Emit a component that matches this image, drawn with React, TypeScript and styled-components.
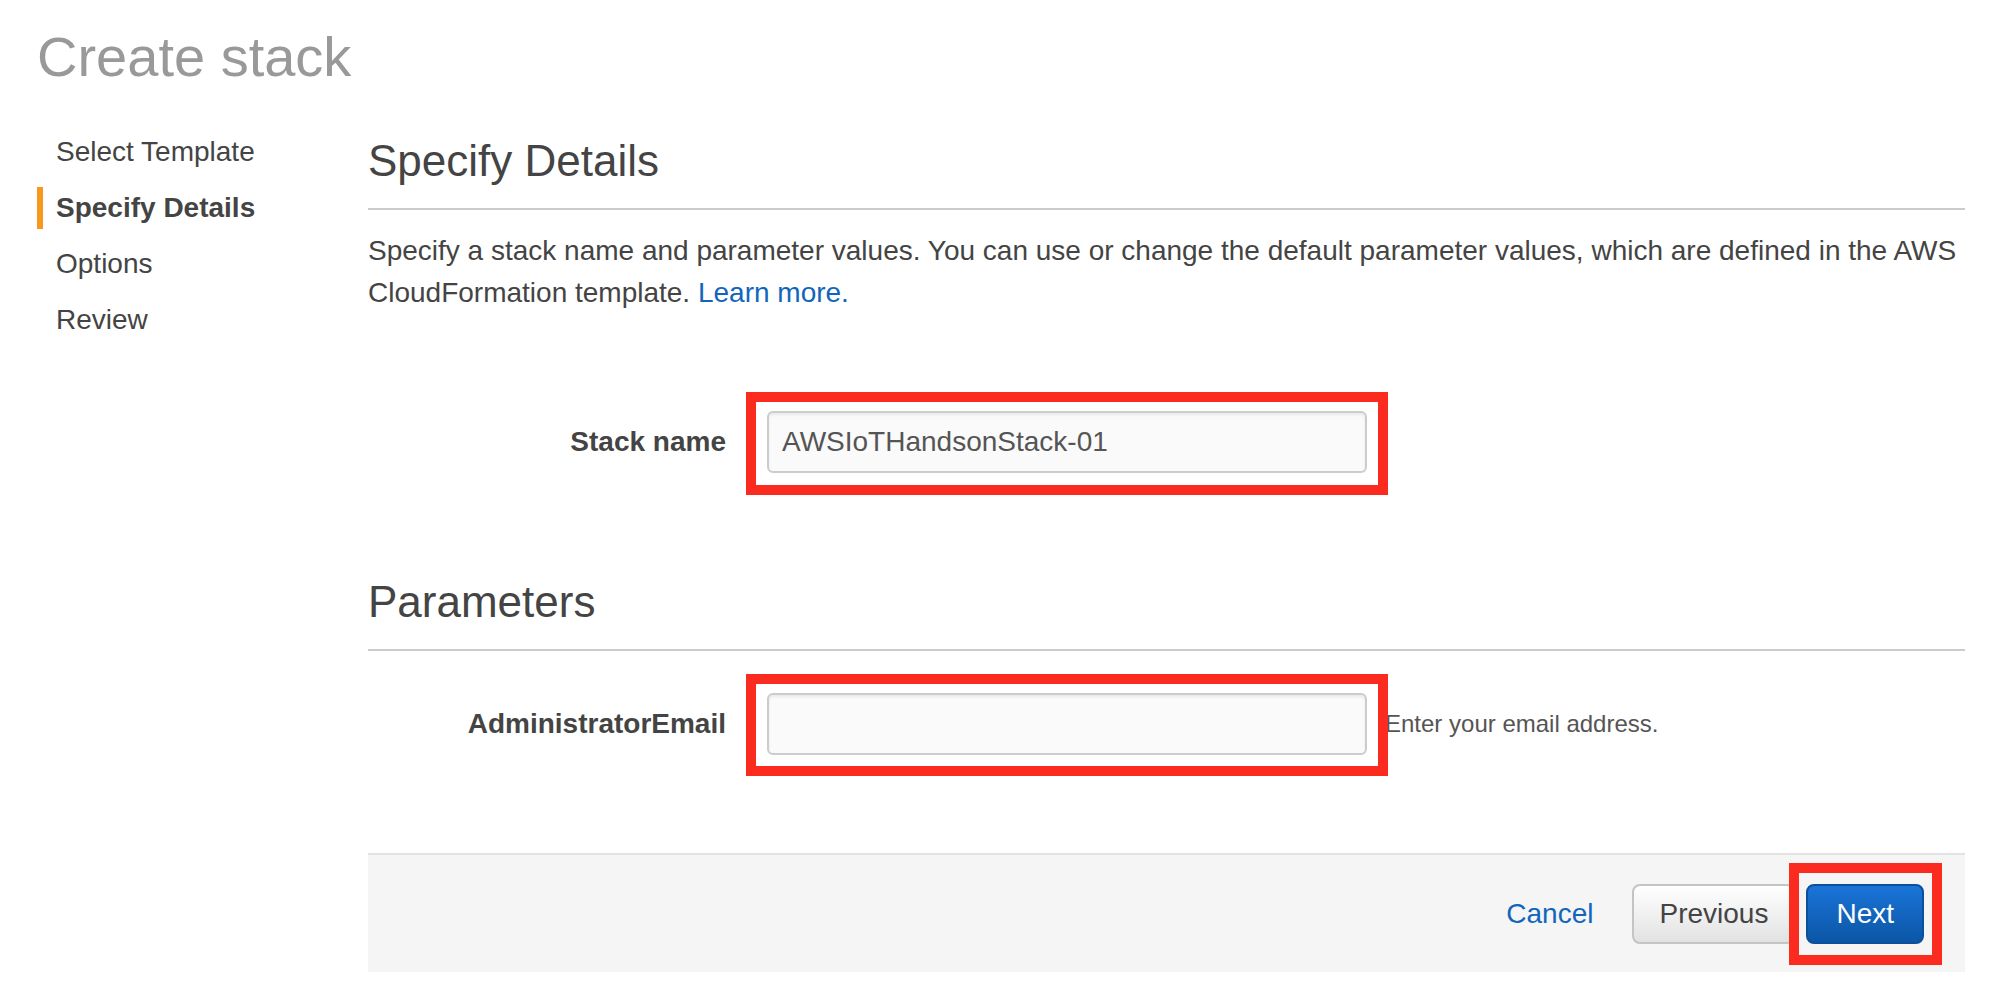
import React from "react";
import styled, { createGlobalStyle } from "styled-components";

const GlobalStyle = createGlobalStyle`
  html, body { margin: 0; padding: 0; background: #ffffff; }
  body {
    font-family: "Liberation Sans", Arial, Helvetica, sans-serif;
    color: #444444;
    -webkit-font-smoothing: antialiased;
  }
  * { box-sizing: border-box; }
`;

const Page = styled.div`
  width: 1990px;
  height: 1002px;
  overflow: hidden;
  padding: 25px 25px 0 37px;
`;

const PageTitle = styled.h1`
  margin: 0;
  font-size: 56px;
  line-height: 64px;
  font-weight: 400;
  color: #999999;
`;

const Layout = styled.div`
  display: grid;
  grid-template-columns: 331px 1fr;
  margin-top: 42px;
`;

const StepList = styled.ul`
  list-style: none;
  margin: 0;
  padding: 0;
  display: flex;
  flex-direction: column;
  gap: 14px;
`;

const Step = styled.li<{ $active?: boolean }>`
  height: 42px;
  line-height: 42px;
  font-size: 28px;
  padding-left: 13px;
  border-left: 6px solid ${(p) => (p.$active ? "#f8991d" : "transparent")};
  font-weight: ${(p) => (p.$active ? 700 : 400)};
  color: #444444;
`;

const Main = styled.main`
  padding-top: 4px;
`;

const SectionTitle = styled.h2<{ $top?: number }>`
  margin: ${(p) => p.$top ?? 0}px 0 0;
  font-size: 44px;
  line-height: 52px;
  font-weight: 400;
  color: #444444;
`;

const Rule = styled.hr`
  margin: 21px 0 0;
  border: 0;
  border-top: 2px solid #cccccc;
  height: 0;
`;

const Intro = styled.p`
  margin: 20px 0 0;
  font-size: 28px;
  line-height: 42px;
  color: #444444;
`;

const Link = styled.a`
  color: #1166bb;
  text-decoration: none;
`;

const FieldRow = styled.div<{ $top: number }>`
  display: flex;
  align-items: center;
  margin-top: ${(p) => p.$top}px;
`;

const FieldLabel = styled.label`
  flex-shrink: 0;
  width: 358px;
  margin-right: 41px;
  text-align: right;
  font-size: 28px;
  font-weight: 700;
  color: #444444;
`;

const Annotated = styled.div<{ $inset: string }>`
  position: relative;
  display: flex;
  &::after {
    content: "";
    position: absolute;
    inset: ${(p) => p.$inset};
    border: 10px solid #fc2b1f;
    pointer-events: none;
  }
`;

const TextInput = styled.input`
  width: 600px;
  height: 62px;
  border: 2px solid #cccccc;
  border-radius: 6px;
  background: #fafafa;
  box-shadow: inset 0 2px 3px rgba(0, 0, 0, 0.07);
  padding: 0 13px;
  font-family: inherit;
  font-size: 28px;
  color: #555555;
  outline: none;
`;

const HelpText = styled.span`
  margin-left: 18px;
  font-size: 24px;
  color: #555555;
`;

const Footer = styled.footer`
  margin-top: 98px;
  height: 119px;
  background: #f5f5f5;
  border-top: 2px solid #e3e3e3;
  display: flex;
  align-items: center;
  justify-content: flex-end;
  padding-right: 41px;
`;

const CancelLink = styled.a`
  margin-right: 39px;
  font-size: 28px;
  color: #1166bb;
  text-decoration: none;
`;

const Button = styled.button<{ $primary?: boolean }>`
  height: 60px;
  padding: 0 ${(p) => (p.$primary ? 28 : 25)}px;
  border-radius: 8px;
  font-family: inherit;
  font-size: 28px;
  cursor: pointer;
  border: 2px solid ${(p) => (p.$primary ? "#0b509c" : "#c4c4c4")};
  color: ${(p) => (p.$primary ? "#ffffff" : "#444444")};
  background: ${(p) =>
    p.$primary
      ? "linear-gradient(#1a74d8, #0b56a6)"
      : "linear-gradient(#ffffff, #e2e2e2)"};
`;

const ButtonGap = styled.div`
  width: 11px;
`;

const steps = ["Select Template", "Specify Details", "Options", "Review"];

export default function App() {
  return (
    <>
      <GlobalStyle />
      <Page>
        <PageTitle>Create stack</PageTitle>
        <Layout>
          <nav>
            <StepList>
              {steps.map((s) => (
                <Step key={s} $active={s === "Specify Details"}>
                  {s}
                </Step>
              ))}
            </StepList>
          </nav>
          <Main>
            <SectionTitle>Specify Details</SectionTitle>
            <Rule />
            <Intro>
              Specify a stack name and parameter values. You can use or change the default
              parameter values, which are defined in the AWS CloudFormation template.{" "}
              <Link href="#">Learn more.</Link>
            </Intro>
            <FieldRow $top={97}>
              <FieldLabel>Stack name</FieldLabel>
              <Annotated $inset="-19px -21px -22px -21px">
                <TextInput defaultValue="AWSIoTHandsonStack-01" />
              </Annotated>
            </FieldRow>
            <SectionTitle $top={103}>Parameters</SectionTitle>
            <Rule />
            <FieldRow $top={42}>
              <FieldLabel>AdministratorEmail</FieldLabel>
              <Annotated $inset="-19px -21px -21px -21px">
                <TextInput defaultValue="" />
              </Annotated>
              <HelpText>Enter your email address.</HelpText>
            </FieldRow>
            <Footer>
              <CancelLink href="#">Cancel</CancelLink>
              <Button>Previous</Button>
              <ButtonGap />
              <Annotated $inset="-21px -18px -21px -17px">
                <Button $primary>Next</Button>
              </Annotated>
            </Footer>
          </Main>
        </Layout>
      </Page>
    </>
  );
}
